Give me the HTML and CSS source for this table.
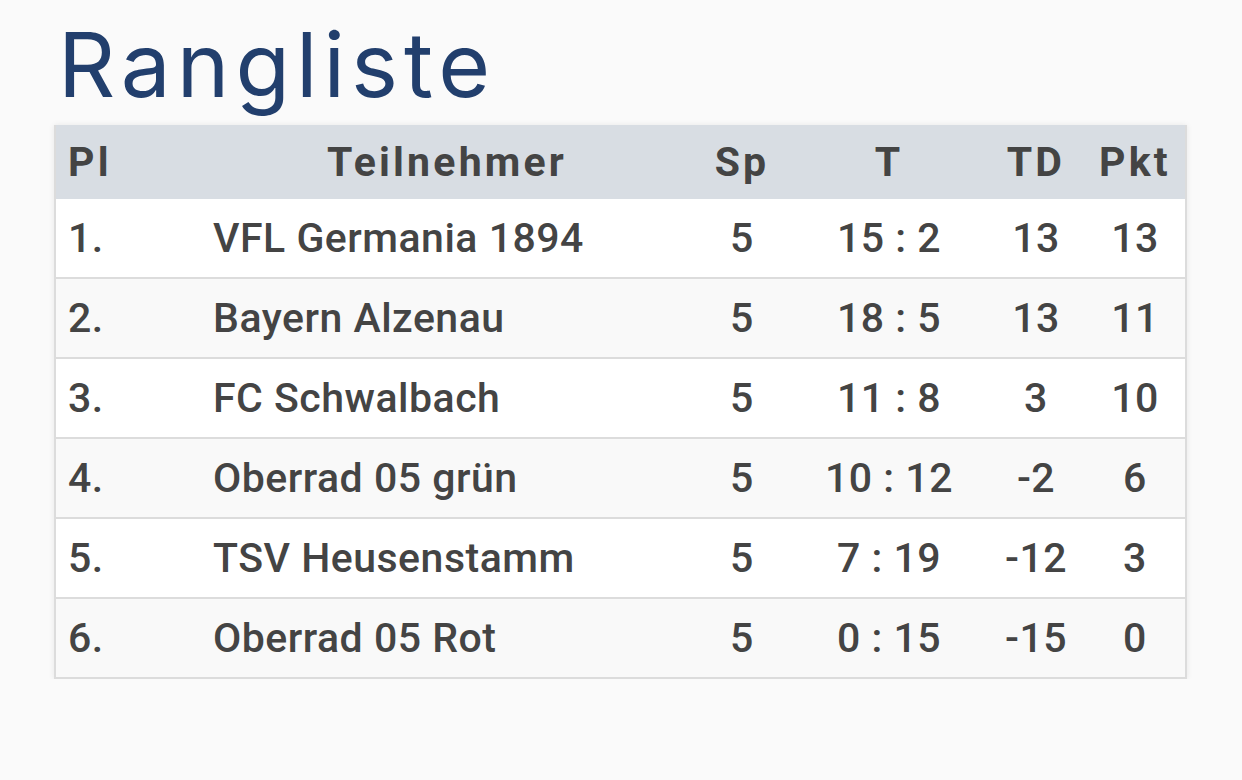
FILE: index.html
```html
<!DOCTYPE html>
<html lang="de">
<head>
<meta charset="utf-8">
<title>Rangliste</title>
<link rel="stylesheet" href="styles.css">
</head>
<body>
<main class="page">
  <h1 class="title">Rangliste</h1>
  <table class="ranking">
    <colgroup>
      <col class="c-pl"><col class="c-name"><col class="c-sp"><col class="c-t"><col class="c-td"><col class="c-pkt">
    </colgroup>
    <thead>
      <tr>
        <th class="left">Pl</th>
        <th>Teilnehmer</th>
        <th>Sp</th>
        <th>T</th>
        <th>TD</th>
        <th>Pkt</th>
      </tr>
    </thead>
    <tbody>
      <tr><td class="left">1.</td><td class="left">VFL Germania 1894</td><td>5</td><td>15 : 2</td><td>13</td><td>13</td></tr>
      <tr><td class="left">2.</td><td class="left">Bayern Alzenau</td><td>5</td><td>18 : 5</td><td>13</td><td>11</td></tr>
      <tr><td class="left">3.</td><td class="left">FC Schwalbach</td><td>5</td><td>11 : 8</td><td>3</td><td>10</td></tr>
      <tr><td class="left">4.</td><td class="left">Oberrad 05 grün</td><td>5</td><td>10 : 12</td><td>-2</td><td>6</td></tr>
      <tr><td class="left">5.</td><td class="left">TSV Heusenstamm</td><td>5</td><td>7 : 19</td><td>-12</td><td>3</td></tr>
      <tr><td class="left">6.</td><td class="left">Oberrad 05 Rot</td><td>5</td><td>0 : 15</td><td>-15</td><td>0</td></tr>
    </tbody>
  </table>
</main>
</body>
</html>
```
FILE: styles.css
```css
html, body {
  margin: 0;
  padding: 0;
  background: #fafafa;
}
.page {
  padding: 20px 0 0 54px;
  width: 1133px;
}
.title {
  margin: 0 0 16px 4px;
  font-family: Inter, "Open Sans", sans-serif;
  font-weight: 400;
  font-size: 89px;
  line-height: 89px;
  letter-spacing: 6px;
  color: #223f6d;
}
.ranking {
  width: 1133px;
  table-layout: fixed;
  border-collapse: collapse;
  border: 2px solid #dcdcdc;
  border-top: none;
  box-shadow: 0 0 6px rgba(0, 0, 0, 0.08);
  font-family: Roboto, "Liberation Sans", sans-serif;
  color: #444;
}
.c-pl { width: 146px; }
.c-name { width: 492px; }
.c-sp { width: 98px; }
.c-t { width: 196px; }
.c-td { width: 98px; }
.c-pkt { width: 101px; }
.ranking thead tr {
  background: #d8dde3;
}
.ranking th {
  height: 74px;
  padding: 0;
  font-size: 41px;
  font-weight: 700;
  letter-spacing: 3.2px;
  text-align: center;
}
.ranking td {
  height: 78px;
  padding: 0;
  font-size: 41px;
  font-weight: 500;
  letter-spacing: 0.5px;
  text-align: center;
  border-bottom: 2px solid #dcdcdc;
}
.ranking tbody tr:nth-child(odd) { background: #fff; }
.ranking tbody tr:nth-child(even) { background: #f9f9f9; }
.ranking .left {
  text-align: left;
  padding-left: 12px;
}
```
